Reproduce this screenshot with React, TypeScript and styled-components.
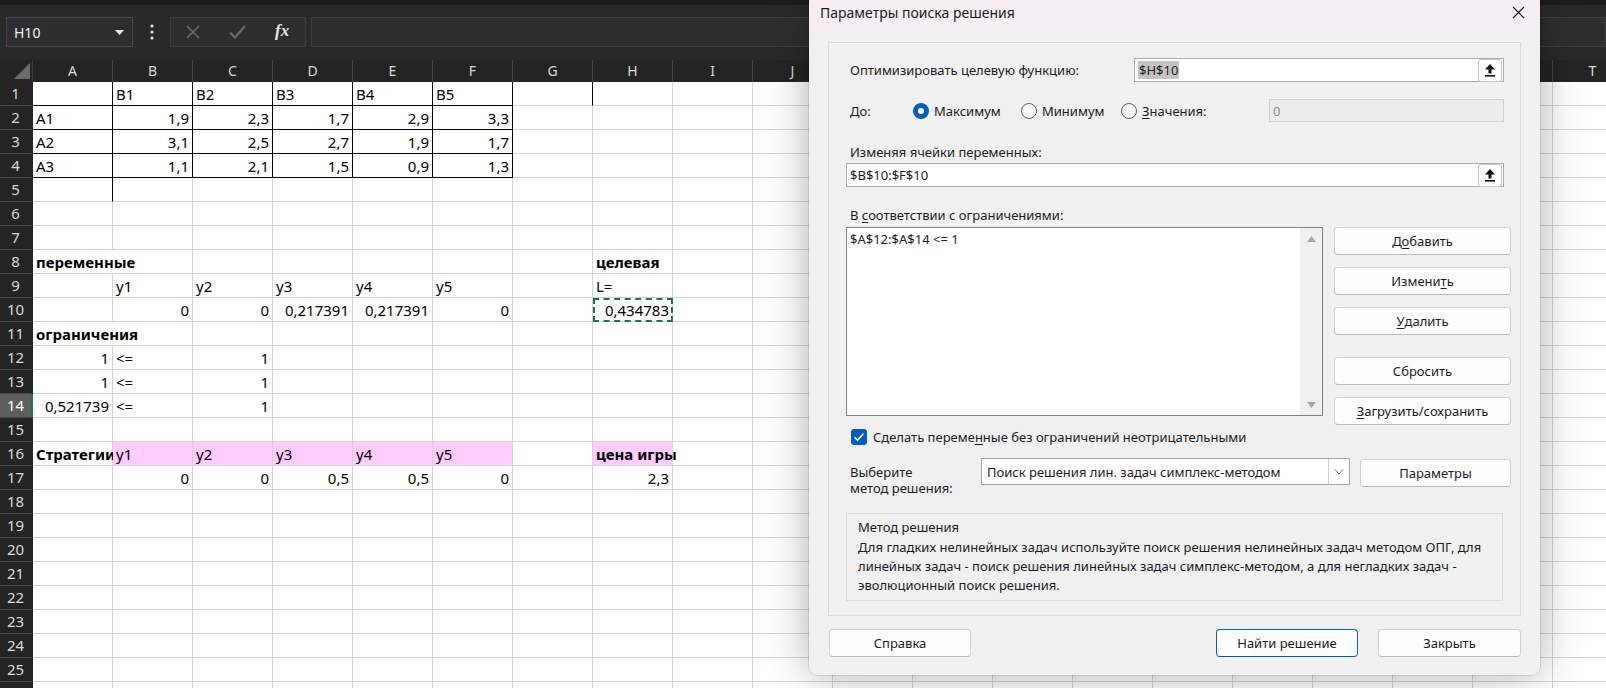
import React from "react";
import styled, { createGlobalStyle, css } from "styled-components";

const GlobalStyle = createGlobalStyle`
  html, body {
    margin: 0;
    padding: 0;
    background: #ffffff;
  }
  body {
    font-family: "Noto Sans", "DejaVu Sans", sans-serif;
  }
`;

const COLS = "ABCDEFGHIJKLMNOPQRST".split("");
const ROW_COUNT = 26;

interface ICellSpec {
  v: string;
  num?: boolean;
  bold?: boolean;
  fill?: string;
  spill?: boolean;
  marquee?: boolean;
}

const PINK = "#ffccff";

const sheet: Record<string, ICellSpec> = {
  B1: { v: "B1" }, C1: { v: "B2" }, D1: { v: "B3" }, E1: { v: "B4" }, F1: { v: "B5" },
  A2: { v: "A1" }, B2: { v: "1,9", num: true }, C2: { v: "2,3", num: true }, D2: { v: "1,7", num: true }, E2: { v: "2,9", num: true }, F2: { v: "3,3", num: true },
  A3: { v: "A2" }, B3: { v: "3,1", num: true }, C3: { v: "2,5", num: true }, D3: { v: "2,7", num: true }, E3: { v: "1,9", num: true }, F3: { v: "1,7", num: true },
  A4: { v: "A3" }, B4: { v: "1,1", num: true }, C4: { v: "2,1", num: true }, D4: { v: "1,5", num: true }, E4: { v: "0,9", num: true }, F4: { v: "1,3", num: true },
  A8: { v: "переменные", bold: true, spill: true },
  H8: { v: "целевая", bold: true },
  B9: { v: "y1" }, C9: { v: "y2" }, D9: { v: "y3" }, E9: { v: "y4" }, F9: { v: "y5" }, H9: { v: "L=" },
  B10: { v: "0", num: true }, C10: { v: "0", num: true }, D10: { v: "0,217391", num: true }, E10: { v: "0,217391", num: true }, F10: { v: "0", num: true },
  H10: { v: "0,434783", num: true, marquee: true },
  A11: { v: "ограничения", bold: true, spill: true },
  A12: { v: "1", num: true }, B12: { v: "<=" }, C12: { v: "1", num: true },
  A13: { v: "1", num: true }, B13: { v: "<=" }, C13: { v: "1", num: true },
  A14: { v: "0,521739", num: true }, B14: { v: "<=" }, C14: { v: "1", num: true },
  // the pink B16 is painted after A16, so it hides whatever spills past the border
  A16: { v: "Стратегии", bold: true, spill: true },
  B16: { v: "y1", fill: PINK }, C16: { v: "y2", fill: PINK }, D16: { v: "y3", fill: PINK }, E16: { v: "y4", fill: PINK }, F16: { v: "y5", fill: PINK },
  H16: { v: "цена игры", bold: true, fill: PINK, spill: true },
  B17: { v: "0", num: true }, C17: { v: "0", num: true }, D17: { v: "0,5", num: true }, E17: { v: "0,5", num: true }, F17: { v: "0", num: true },
  H17: { v: "2,3", num: true },
};

const tableCols = ["A", "B", "C", "D", "E", "F"];
const blackRight = new Set<string>(["A5", "G1"]);
const blackBottom = new Set<string>();
[1, 2, 3, 4].forEach((r) => {
  tableCols.forEach((c) => {
    blackRight.add(c + r);
    blackBottom.add(c + r);
  });
});
const hiddenRight = new Set<string>(["A8", "A11"]);

/* ---------- Excel chrome ---------- */

const Screen = styled.div`
  position: relative;
  width: 1606px;
  height: 688px;
  overflow: hidden;
  background: #ffffff;
`;

const Toolbar = styled.div`
  box-sizing: border-box;
  height: 60px;
  background: #292929;
  border-top: 5px solid #1c1c1c;
  padding: 12px 0 0 6px;
  display: flex;
  align-items: flex-start;
`;

const NameBox = styled.div`
  box-sizing: border-box;
  width: 127px;
  height: 30px;
  background: #2e2e2e;
  border: 1px solid #464646;
  display: flex;
  align-items: center;
  justify-content: space-between;
  padding: 0 8px 0 7px;
  color: #f2f2f2;
  font-size: 14px;
`;

const MoreDots = styled.div`
  width: 37px;
  height: 30px;
  display: flex;
  align-items: center;
  justify-content: center;
`;

const FormulaTools = styled.div`
  box-sizing: border-box;
  width: 136px;
  height: 30px;
  background: #2e2e2e;
  border: 1px solid #3e3e3e;
  display: flex;
  align-items: center;
  gap: 29px;
  padding-left: 15px;
`;

const FxMark = styled.span`
  font-family: "Liberation Serif", "DejaVu Serif", serif;
  font-style: italic;
  font-weight: 700;
  font-size: 17px;
  color: #e6e6e6;
  margin-bottom: 2px;
`;

const FormulaInput = styled.div`
  box-sizing: border-box;
  flex: 1;
  margin-left: 5px;
  height: 30px;
  background: #2e2e2e;
  border: 1px solid #3e3e3e;
`;

const Grid = styled.div`
  display: grid;
  grid-template-columns: 33px repeat(${COLS.length}, 80px);
  grid-template-rows: 22px repeat(${ROW_COUNT}, 24px);
  background: #ffffff;
`;

const Corner = styled.div`
  background: #242424;
  border-right: 1px solid #3a3a3a;
`;

const ColHead = styled.div`
  box-sizing: border-box;
  background: #242424;
  border-right: 1px solid #474747;
  color: #d9d9d9;
  font-size: 14px;
  line-height: 22px;
  text-align: center;
`;

const RowHead = styled.div<{ $active?: boolean }>`
  box-sizing: border-box;
  background: ${(p) => (p.$active ? "#5e5e5e" : "#242424")};
  border-bottom: 1px solid #474747;
  border-right: 2px solid ${(p) => (p.$active ? "#1f7a48" : "#242424")};
  color: ${(p) => (p.$active ? "#ffffff" : "#d9d9d9")};
  font-size: 15px;
  line-height: 23px;
  text-align: center;
`;

const Cell = styled.div<{
  $num?: boolean;
  $bold?: boolean;
  $fill?: string;
  $br?: boolean;
  $bb?: boolean;
  $noRight?: boolean;
  $spill?: boolean;
  $marquee?: boolean;
}>`
  box-sizing: border-box;
  position: relative;
  padding: 1px 3px 0;
  border-right: 1px solid ${(p) => (p.$br ? "#000000" : p.$noRight ? "transparent" : "#d4d4d4")};
  border-bottom: 1px solid ${(p) => (p.$bb ? "#000000" : "#d4d4d4")};
  background: ${(p) => p.$fill || "transparent"};
  color: #000000;
  font-size: 15px;
  font-weight: ${(p) => (p.$bold ? 700 : 400)};
  line-height: 22px;
  text-align: ${(p) => (p.$num ? "right" : "left")};
  white-space: nowrap;
  overflow: ${(p) => (p.$spill ? "visible" : "hidden")};
  ${(p) =>
    p.$marquee &&
    css`
      outline: 2px dashed #217346;
      outline-offset: -2px;
    `}
`;

/* ---------- Solver dialog ---------- */

const Dialog = styled.div`
  position: absolute;
  left: 809px;
  top: 0;
  width: 731px;
  height: 675px;
  background: #f0f0f0;
  border-radius: 0 0 8px 8px;
  box-shadow: 0 0 44px rgba(0, 0, 0, 0.32), 0 0 0 1px rgba(0, 0, 0, 0.1);
  display: flex;
  flex-direction: column;
  font-family: "Noto Sans", "DejaVu Sans", sans-serif;
  font-size: 13px;
  color: #1b1b1b;
`;

const TitleBar = styled.div`
  box-sizing: border-box;
  height: 29px;
  background: #f5eef3;
  display: flex;
  align-items: center;
  justify-content: space-between;
  padding: 0 15px 5px 11px;
  font-size: 14px;
  color: #1a1a1a;
`;

const Body = styled.div`
  padding: 13px 19px 0;
  display: flex;
  flex-direction: column;
`;

const GroupBox = styled.div`
  box-sizing: border-box;
  height: 574px;
  border: 1px solid #dadada;
  padding: 15px 9px 0 17px;
  display: flex;
  flex-direction: column;
`;

const Row = styled.div<{ $top?: number; $h?: number }>`
  display: flex;
  align-items: center;
  margin-top: ${(p) => p.$top || 0}px;
  height: ${(p) => (p.$h ? `${p.$h}px` : "auto")};
`;

const Label = styled.div<{ $w?: number; $top?: number }>`
  box-sizing: border-box;
  flex: none;
  width: ${(p) => (p.$w ? `${p.$w}px` : "auto")};
  margin-top: ${(p) => p.$top || 0}px;
  padding-left: 4px;
  line-height: 16px;
  white-space: nowrap;
`;

const TextBox = styled.div<{ $w: number; $h?: number; $disabled?: boolean }>`
  box-sizing: border-box;
  flex: none;
  width: ${(p) => p.$w}px;
  height: ${(p) => p.$h || 24}px;
  background: ${(p) => (p.$disabled ? "#ececec" : "#ffffff")};
  border: 1px solid ${(p) => (p.$disabled ? "#cfcfcf" : "#ababab")};
  display: flex;
  align-items: center;
  justify-content: space-between;
  padding-left: 3px;
  color: ${(p) => (p.$disabled ? "#8c8c8c" : "#1b1b1b")};
  white-space: nowrap;
`;

const Selected = styled.span`
  background: #c4c4c4;
  padding: 0 1px;
`;

const PickButton = styled.div`
  box-sizing: border-box;
  width: 24px;
  height: 23px;
  margin-right: 1px;
  background: #ffffff;
  border: 1px solid #c4c4c4;
  border-radius: 3px;
  display: flex;
  align-items: center;
  justify-content: center;
`;

const Radio = styled.div<{ $w: number }>`
  flex: none;
  width: ${(p) => p.$w}px;
  display: flex;
  align-items: center;
  gap: 5px;
`;

const RadioDot = styled.span<{ $on?: boolean }>`
  box-sizing: border-box;
  flex: none;
  width: 16px;
  height: 16px;
  border-radius: 50%;
  ${(p) =>
    p.$on
      ? css`
          background: #ffffff;
          border: 5px solid #005fb8;
        `
      : css`
          background: #f8f8f8;
          border: 1px solid #5f5f5f;
        `}
`;

const ListRow = styled.div`
  margin-top: 4px;
  display: flex;
  align-items: flex-start;
  gap: 11px;
`;

const ListBox = styled.div`
  box-sizing: border-box;
  width: 477px;
  height: 189px;
  background: #ffffff;
  border: 1px solid #828282;
  display: flex;
`;

const ListText = styled.div`
  flex: 1;
  padding: 3px 3px;
  line-height: 16px;
  white-space: nowrap;
`;

const ScrollBar = styled.div`
  width: 22px;
  background: #f0f0f0;
  display: flex;
  flex-direction: column;
  justify-content: space-between;
  align-items: center;
  padding: 8px 0 7px;
`;

const ButtonColumn = styled.div`
  display: flex;
  flex-direction: column;
  width: 177px;
`;

const Button = styled.div<{ $w?: number; $top?: number; $primary?: boolean }>`
  box-sizing: border-box;
  flex: none;
  width: ${(p) => (p.$w ? `${p.$w}px` : "100%")};
  height: 28px;
  margin-top: ${(p) => p.$top || 0}px;
  background: #fdfdfd;
  border: 1px solid ${(p) => (p.$primary ? "#0067c0" : "#d0d0d0")};
  border-bottom-color: ${(p) => (p.$primary ? "#0058a8" : "#b8b8b8")};
  border-radius: 4px;
  display: flex;
  align-items: center;
  justify-content: center;
  white-space: nowrap;
`;

const CheckRow = styled.div`
  margin-top: 4px;
  display: flex;
  align-items: center;
  gap: 6px;
  padding-left: 5px;
  height: 16px;
`;

const CheckBox = styled.span`
  flex: none;
  width: 16px;
  height: 16px;
  border-radius: 3px;
  background: #005fb8;
  display: flex;
  align-items: center;
  justify-content: center;
`;

const SelectRow = styled.div`
  margin-top: 13px;
  display: flex;
  align-items: flex-start;
`;

const Select = styled.div`
  box-sizing: border-box;
  width: 369px;
  height: 27px;
  background: #ffffff;
  border: 1px solid #a6a6a6;
  display: flex;
  align-items: stretch;
  margin-right: 10px;
`;

const SelectValue = styled.div`
  flex: 1;
  padding-left: 5px;
  display: flex;
  align-items: center;
  white-space: nowrap;
`;

const SelectArrow = styled.div`
  width: 20px;
  border-left: 1px solid #d2d2d2;
  display: flex;
  align-items: center;
  justify-content: center;
`;

const MethodBox = styled.div`
  box-sizing: border-box;
  margin-top: 17px;
  width: 657px;
  height: 88px;
  border: 1px solid #dcdcdc;
  padding: 5px 11px 0;
`;

const MethodTitle = styled.div`
  line-height: 16px;
`;

const MethodText = styled.div`
  margin-top: 3px;
  line-height: 19px;
`;

const Footer = styled.div`
  margin-top: 13px;
  padding-left: 1px;
  display: flex;
  gap: 20px;
`;

const Spacer = styled.div`
  flex: 1;
`;

const U = styled.span`
  text-decoration: underline;
  text-underline-offset: 2px;
`;

/* ---------- icons ---------- */

const UploadIcon = () => (
  <svg width="12" height="14" viewBox="0 0 12 14">
    <polygon points="6,1 11,6.5 7.5,6.5 7.5,10.5 4.5,10.5 4.5,6.5 1,6.5" fill="#111" />
    <rect x="1" y="12" width="10" height="1.6" fill="#111" />
  </svg>
);

const CloseIcon = () => (
  <svg width="13" height="13" viewBox="0 0 13 13">
    <path d="M1 1 L12 12 M12 1 L1 12" stroke="#1a1a1a" strokeWidth="1.1" />
  </svg>
);

const Triangle = ({ up }: { up?: boolean }) => (
  <svg width="9" height="6" viewBox="0 0 9 6">
    <polygon points={up ? "0,6 4.5,0 9,6" : "0,0 4.5,6 9,0"} fill="#a6a6a6" />
  </svg>
);

const Chevron = () => (
  <svg width="10" height="6" viewBox="0 0 10 6">
    <path d="M1 0.5 L5 5 L9 0.5" stroke="#6d6d6d" strokeWidth="1" fill="none" />
  </svg>
);

const CheckMark = () => (
  <svg width="12" height="10" viewBox="0 0 12 10">
    <path d="M1.5 5.2 L4.5 8.2 L10.5 1.5" stroke="#ffffff" strokeWidth="1.5" fill="none" />
  </svg>
);

const Caret = () => (
  <svg width="9" height="5" viewBox="0 0 9 5">
    <polygon points="0,0 9,0 4.5,5" fill="#e8e8e8" />
  </svg>
);

const VDots = () => (
  <svg width="4" height="16" viewBox="0 0 4 16">
    <circle cx="2" cy="2" r="1.6" fill="#e4e4e4" />
    <circle cx="2" cy="8" r="1.6" fill="#e4e4e4" />
    <circle cx="2" cy="14" r="1.6" fill="#e4e4e4" />
  </svg>
);

const CancelIcon = () => (
  <svg width="14" height="14" viewBox="0 0 14 14">
    <path d="M1 1 L13 13 M13 1 L1 13" stroke="#6a6a6a" strokeWidth="1.6" />
  </svg>
);

const EnterIcon = () => (
  <svg width="17" height="14" viewBox="0 0 17 14">
    <path d="M1 7.5 L6 12.5 L16 1" stroke="#6a6a6a" strokeWidth="2.2" fill="none" />
  </svg>
);

const CornerMark = () => (
  <svg width="33" height="22" viewBox="0 0 33 22">
    <polygon points="14,19 30,3 30,19" fill="#6b6b6b" />
  </svg>
);

/* ---------- parts ---------- */

const Sheet = () => {
  const rows = Array.from({ length: ROW_COUNT }, (_, i) => i + 1);
  return (
    <Grid>
      <Corner>
        <CornerMark />
      </Corner>
      {COLS.map((c) => (
        <ColHead key={c}>{c}</ColHead>
      ))}
      {rows.map((r) => (
        <React.Fragment key={r}>
          <RowHead $active={r === 14}>{r}</RowHead>
          {COLS.map((c) => {
            const id = c + r;
            const spec = sheet[id];
            return (
              <Cell
                key={id}
                $num={spec?.num}
                $bold={spec?.bold}
                $fill={spec?.fill}
                $spill={spec?.spill}
                $marquee={spec?.marquee}
                $br={blackRight.has(id)}
                $bb={blackBottom.has(id)}
                $noRight={hiddenRight.has(id)}
              >
                {spec?.v}
              </Cell>
            );
          })}
        </React.Fragment>
      ))}
    </Grid>
  );
};

const SolverDialog = () => (
  <Dialog>
    <TitleBar>
      <span>Параметры поиска решения</span>
      <CloseIcon />
    </TitleBar>
    <Body>
      <GroupBox>
        <Row $h={24}>
          <Label $w={288}>Оптимизировать целевую функцию:</Label>
          <TextBox $w={370}>
            <Selected>$H$10</Selected>
            <PickButton>
              <UploadIcon />
            </PickButton>
          </TextBox>
        </Row>

        <Row $top={17} $h={23}>
          <Label $w={67}>До:</Label>
          <Radio $w={108}>
            <RadioDot $on />
            Максимум
          </Radio>
          <Radio $w={100}>
            <RadioDot />
            Минимум
          </Radio>
          <Radio $w={148}>
            <RadioDot />
            <span>
              <U>З</U>начения:
            </span>
          </Radio>
          <TextBox $w={235} $h={23} $disabled>
            0
          </TextBox>
        </Row>

        <Label $top={22}>Изменяя ячейки переменных:</Label>
        <Row $top={3}>
          <TextBox $w={658}>
            <span>$B$10:$F$10</span>
            <PickButton>
              <UploadIcon />
            </PickButton>
          </TextBox>
        </Row>

        <Label $top={20}>
          В <U>с</U>оответствии с ограничениями:
        </Label>
        <ListRow>
          <ListBox>
            <ListText>$A$12:$A$14 &lt;= 1</ListText>
            <ScrollBar>
              <Triangle up />
              <Triangle />
            </ScrollBar>
          </ListBox>
          <ButtonColumn>
            <Button>
              Д<U>о</U>бавить
            </Button>
            <Button $top={12}>
              Измени<U>т</U>ь
            </Button>
            <Button $top={12}>
              <U>У</U>далить
            </Button>
            <Button $top={22}>Сбросить</Button>
            <Button $top={12}>
              <U>З</U>агрузить/сохранить
            </Button>
          </ButtonColumn>
        </ListRow>

        <CheckRow>
          <CheckBox>
            <CheckMark />
          </CheckBox>
          <span>
            Сделать переме<U>н</U>ные без ограничений неотрицательными
          </span>
        </CheckRow>

        <SelectRow>
          <Label $w={135} $top={6}>
            Выберите
            <br />
            метод решения:
          </Label>
          <Select>
            <SelectValue>Поиск решения лин. задач симплекс-методом</SelectValue>
            <SelectArrow>
              <Chevron />
            </SelectArrow>
          </Select>
          <Button $w={151} $top={1}>
            Параметры
          </Button>
        </SelectRow>

        <MethodBox>
          <MethodTitle>Метод решения</MethodTitle>
          <MethodText>
            Для гладких нелинейных задач используйте поиск решения нелинейных задач методом ОПГ, для
            <br />
            линейных задач - поиск решения линейных задач симплекс-методом, а для негладких задач -
            <br />
            эволюционный поиск решения.
          </MethodText>
        </MethodBox>
      </GroupBox>

      <Footer>
        <Button $w={142}>Справка</Button>
        <Spacer />
        <Button $w={142} $primary>
          Найти решение
        </Button>
        <Button $w={143}>Закрыть</Button>
      </Footer>
    </Body>
  </Dialog>
);

export default function App() {
  return (
    <Screen>
      <GlobalStyle />
      <Toolbar>
        <NameBox>
          <span>H10</span>
          <Caret />
        </NameBox>
        <MoreDots>
          <VDots />
        </MoreDots>
        <FormulaTools>
          <CancelIcon />
          <EnterIcon />
          <FxMark>fx</FxMark>
        </FormulaTools>
        <FormulaInput />
      </Toolbar>
      <Sheet />
      <SolverDialog />
    </Screen>
  );
}
